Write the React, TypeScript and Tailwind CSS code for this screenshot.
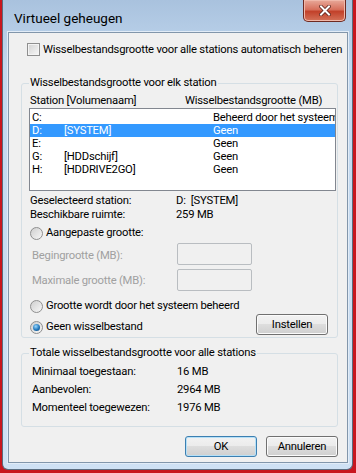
import React from "react";

function Radio({ checked }: { checked?: boolean }) {
  return (
    <span className="flex h-[13px] w-[13px] shrink-0 items-center justify-center rounded-full border border-[#8f8f8f] bg-[linear-gradient(135deg,#cfcfcf,#f7f7f7)]">
      {checked && (
        <span className="h-[7px] w-[7px] rounded-full bg-[radial-gradient(circle_at_40%_35%,#9ad8ff,#2277bb_55%,#0e3f6d)]" />
      )}
    </span>
  );
}

function Btn({ label, primary }: { label: string; primary?: boolean }) {
  return (
    <button
      className={`h-[21px] w-[72px] rounded-[3px] border leading-[19px] text-black bg-[linear-gradient(#f2f2f2_0%,#ebebeb_49%,#dddddd_50%,#cfcfcf_100%)] ${
        primary
          ? "border-[#3c7fb1] shadow-[inset_0_0_0_1px_#b6e0f7]"
          : "border-[#707070] shadow-[inset_0_0_0_1px_#fbfbfb]"
      }`}
    >
      {label}
    </button>
  );
}

const drives = [
  { d: "C:", name: "", size: "Beheerd door het systeem" },
  { d: "D:", name: "[SYSTEM]", size: "Geen", selected: true },
  { d: "E:", name: "", size: "Geen" },
  { d: "G:", name: "[HDDschijf]", size: "Geen" },
  { d: "H:", name: "[HDDRIVE2GO]", size: "Geen" },
];

export default function App() {
  return (
    <div className="h-[473px] w-[356px] overflow-hidden bg-[#c8161e] pl-[2px] pr-[3px] pb-[3px] font-['Roboto',sans-serif] text-[11.25px] tracking-[-0.22px] text-black">
      {/* window frame */}
      <div className="flex h-full flex-col rounded-b-[6px] border-x border-b border-[#5a6b7d] bg-[linear-gradient(180deg,#a9c2de_0%,#c2d8ef_14%,#cfe1f4_100%)] pl-[5px] pr-[4px] pb-[6px]">
        {/* title bar */}
        <div className="flex h-[32px] shrink-0 items-start">
          <span className="ml-[6px] mt-[10px] text-[13.5px] leading-[16px] tracking-normal text-black">Virtueel geheugen</span>
          <div className="ml-auto mr-[2px] flex h-[22px] w-[43px] items-center justify-center rounded-b-[5px] border border-t-0 border-[#6e2a22] bg-[linear-gradient(180deg,#e8a99a_0%,#d7705c_45%,#c2412a_55%,#d4735a_100%)] shadow-[inset_0_0_0_1px_#f0b8aa]">
            <svg width="12" height="11" viewBox="0 0 12 11">
              <path d="M2 1.5 L10 9.5 M10 1.5 L2 9.5" stroke="#5a2018" strokeWidth="3.6" strokeLinecap="square" />
              <path d="M2 1.5 L10 9.5 M10 1.5 L2 9.5" stroke="#ffffff" strokeWidth="2" strokeLinecap="square" />
            </svg>
          </div>
        </div>

        {/* client area */}
        <div className="flex min-w-0 flex-1 flex-col border border-[#8296ab] bg-[#f0f0f0] pl-[12px] pr-[9px] shadow-[0_0_0_1px_#e2ecf7]">
          {/* checkbox */}
          <div className="ml-[6px] mt-[10px] flex h-[13px] items-center gap-[3px]">
            <span className="h-[13px] w-[13px] shrink-0 border border-[#8f8f8f] bg-[linear-gradient(135deg,#d2d2d2,#f8f8f8)] shadow-[inset_0_0_0_1px_#f4f4f4]" />
            <span className="whitespace-nowrap leading-[13px]">
              Wisselbestandsgrootte voor alle stations automatisch beheren
            </span>
          </div>

          {/* per-drive group */}
          <fieldset className="mt-[19px] min-w-0 rounded-[3px] border border-[#d5dfe5] pl-[7px] pr-[1px] pb-[3px]">
            <legend className="px-[1px] leading-[16px]">Wisselbestandsgrootte voor elk station</legend>
            <div className="ml-[1px] mt-[3px] flex h-[14px] whitespace-nowrap leading-[14px]">
              <span className="w-[155px] shrink-0">Station [Volumenaam]</span>
              <span>Wisselbestandsgrootte (MB)</span>
            </div>
            <div className="h-[83px] overflow-hidden border border-[#828790] bg-white pt-[2px]">
              {drives.map((r) => (
                <div
                  key={r.d}
                  className={`flex h-[13px] overflow-hidden whitespace-nowrap pl-[2px] leading-[13px] ${
                    r.selected ? "bg-[#3399ff] text-white" : ""
                  }`}
                >
                  <span className="w-[32px] shrink-0">{r.d}</span>
                  <span className="w-[149px] shrink-0">{r.name}</span>
                  <span>{r.size}</span>
                </div>
              ))}
            </div>

            <div className="ml-[1px] mt-[3px] flex h-[14px] leading-[14px]">
              <span className="w-[146px]">Geselecteerd station:</span>
              <span>D:&nbsp;&nbsp;[SYSTEM]</span>
            </div>
            <div className="ml-[1px] flex h-[14px] leading-[14px]">
              <span className="w-[146px]">Beschikbare ruimte:</span>
              <span>259 MB</span>
            </div>

            <div className="ml-[1px] mt-[4px] flex h-[14px] items-center gap-[3px] leading-[14px]">
              <Radio />
              <span>Aangepaste grootte:</span>
            </div>
            <div className="ml-[3px] mt-[3px] flex h-[22px] items-center text-[#a0a0a0]">
              <span className="mt-[4px] w-[145px]">Begingrootte (MB):</span>
              <span className="h-[22px] w-[75px] rounded-[2px] border border-[#b9bdc1] bg-[#f0f0f0]" />
            </div>
            <div className="ml-[3px] mt-[4px] flex h-[22px] items-center text-[#a0a0a0]">
              <span className="mt-[3px] w-[145px]">Maximale grootte (MB):</span>
              <span className="h-[22px] w-[75px] rounded-[2px] border border-[#b9bdc1] bg-[#f0f0f0]" />
            </div>

            <div className="ml-[1px] mt-[8px] flex h-[14px] items-center gap-[3px] leading-[14px]">
              <Radio />
              <span>Grootte wordt door het systeem beheerd</span>
            </div>
            <div className="mt-[1px] flex h-[20px] items-start justify-between">
              <div className="ml-[1px] mt-[6px] flex h-[14px] items-center gap-[3px] leading-[14px]">
                <Radio checked />
                <span>Geen wisselbestand</span>
              </div>
              <div className="mr-[8px]">
                <Btn label="Instellen" />
              </div>
            </div>
          </fieldset>

          {/* totals group */}
          <fieldset className="mt-[7px] min-w-0 rounded-[3px] border border-[#d5dfe5] pl-[7px] pr-[1px] pb-[9px]">
            <legend className="px-[1px] leading-[16px]">Totale wisselbestandsgrootte voor alle stations</legend>
            <div className="mt-[2px]">
              {[
                ["Minimaal toegestaan:", "16 MB"],
                ["Aanbevolen:", "2964 MB"],
                ["Momenteel toegewezen:", "1976 MB"],
              ].map(([k, v]) => (
                <div key={k} className="ml-[3px] flex h-[18px] leading-[18px]">
                  <span className="w-[145px]">{k}</span>
                  <span>{v}</span>
                </div>
              ))}
            </div>
          </fieldset>

          <div className="mt-[9px] flex justify-end gap-[9px]">
            <Btn label="OK" primary />
            <Btn label="Annuleren" />
          </div>
        </div>
      </div>
    </div>
  );
}
